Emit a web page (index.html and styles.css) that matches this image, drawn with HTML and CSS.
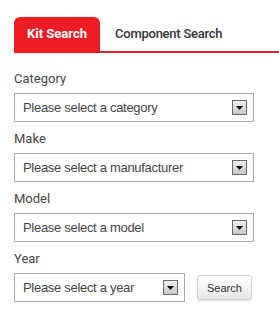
FILE: index.html
```html
<!DOCTYPE html>
<html lang="en">

<head>
    <meta charset="UTF-8">
    <meta name="viewport" content="width=device-width, initial-scale=1.0">
    <title>Kit Search</title>
    <link rel="stylesheet" href="styles.css">
</head>

<body>
    <div class="finder">
        <div class="tabs">
            <a href="#" class="tab active">Kit Search</a>
            <a href="#" class="tab">Component Search</a>
        </div>

        <div class="form">
            <div class="field">
                <label>Category</label>
                <div class="select">
                    <span>Please select a category</span>
                    <span class="arrow"><svg width="7" height="4" viewBox="0 0 7 4"><path d="M0 0h7L3.5 4z" fill="#000"/></svg></span>
                </div>
            </div>
            <div class="field">
                <label>Make</label>
                <div class="select">
                    <span>Please select a manufacturer</span>
                    <span class="arrow"><svg width="7" height="4" viewBox="0 0 7 4"><path d="M0 0h7L3.5 4z" fill="#000"/></svg></span>
                </div>
            </div>
            <div class="field">
                <label>Model</label>
                <div class="select">
                    <span>Please select a model</span>
                    <span class="arrow"><svg width="7" height="4" viewBox="0 0 7 4"><path d="M0 0h7L3.5 4z" fill="#000"/></svg></span>
                </div>
            </div>
            <div class="field">
                <label>Year</label>
                <div class="row">
                    <div class="select short">
                        <span>Please select a year</span>
                        <span class="arrow"><svg width="7" height="4" viewBox="0 0 7 4"><path d="M0 0h7L3.5 4z" fill="#000"/></svg></span>
                    </div>
                    <button class="search-btn">Search</button>
                </div>
            </div>
        </div>
    </div>
</body>

</html>
```

FILE: styles.css
```css
body {
    margin: 0;
    background: #ffffff;
    font-family: Roboto, Arial, sans-serif;
}

.finder {
    padding: 17px 0 0 14px;
}

.tabs {
    display: flex;
    border-bottom: 2px solid #ee1d25;
}

.tab {
    display: block;
    height: 34px;
    line-height: 34px;
    padding: 0 13px;
    font-size: 13px;
    font-weight: 500;
    letter-spacing: -0.25px;
    color: #333333;
    text-decoration: none;
}

.tab.active {
    background: #ee1d25;
    color: #ffffff;
    font-weight: bold;
    letter-spacing: 0;
    border-radius: 6px 6px 0 0;
    margin-right: 2px;
}

.form {
    padding-top: 16px;
}

.field {
    margin-bottom: 7px;
}

.field label {
    display: block;
    font-size: 13px;
    line-height: 20px;
    color: #444444;
    margin-bottom: 4px;
}

.select {
    display: flex;
    align-items: center;
    justify-content: space-between;
    box-sizing: border-box;
    width: 240px;
    height: 29px;
    padding: 0 6px 0 8px;
    border: 1px solid #a9a9a9;
    font-family: "Liberation Sans", Arial, sans-serif;
    font-size: 13px;
    letter-spacing: -0.3px;
    color: #444444;
}

.select.short {
    width: 171px;
}

.arrow {
    display: flex;
    align-items: center;
    justify-content: center;
    box-sizing: border-box;
    width: 15px;
    height: 15px;
    border: 1px solid #666666;
    background: linear-gradient(#f0f0f0, #c8c8c8);
}

.row {
    display: flex;
    align-items: center;
}

.search-btn {
    margin-left: 12px;
    height: 25px;
    padding: 0 9px;
    border: 1px solid #d0d0d0;
    border-radius: 3px;
    background: linear-gradient(#ffffff, #e6e6e6);
    box-shadow: 0 1px 2px rgba(0, 0, 0, 0.15);
    font-family: "Liberation Sans", Arial, sans-serif;
    font-size: 11px;
    color: #333333;
}
```
